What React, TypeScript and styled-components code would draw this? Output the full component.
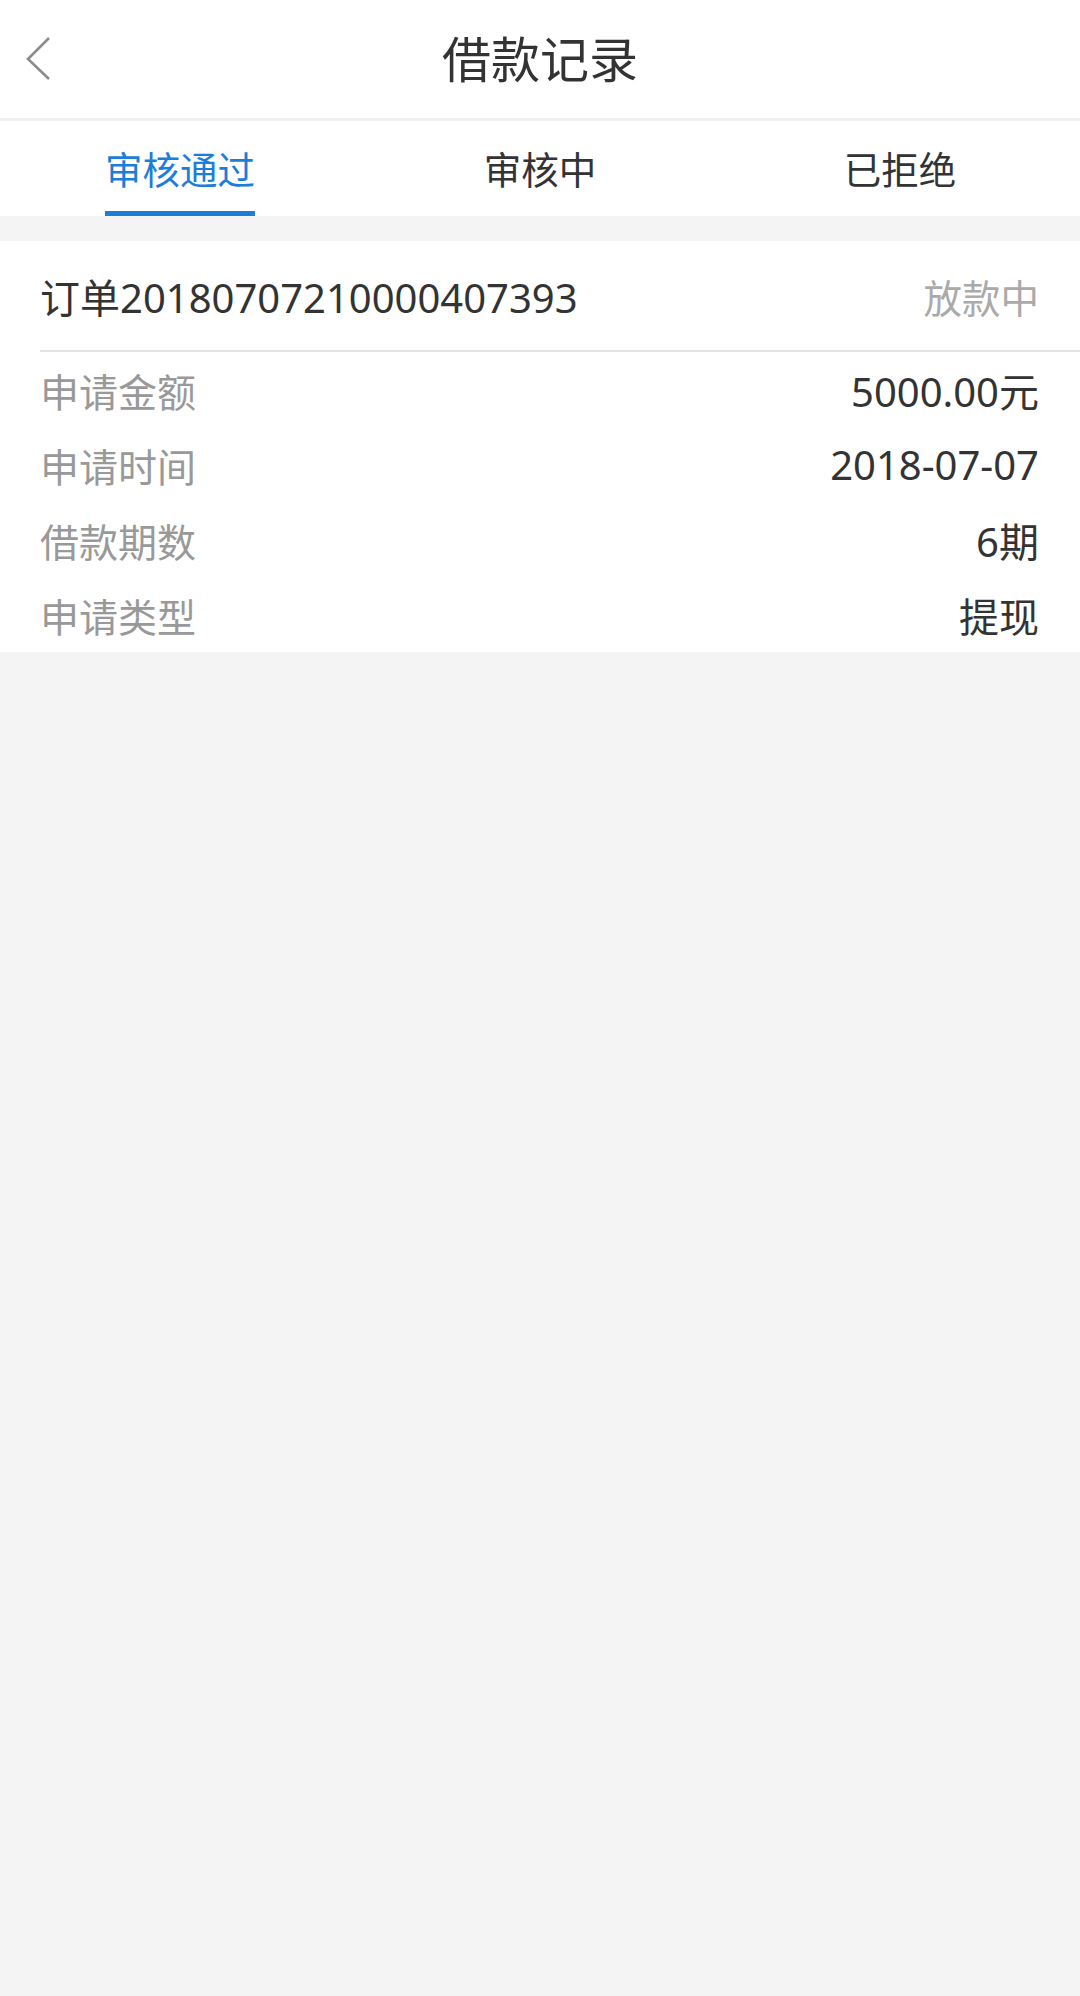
import React, { useState } from "react";
import styled, { createGlobalStyle } from "styled-components";

const GlobalStyle = createGlobalStyle`
  html, body {
    margin: 0;
    padding: 0;
    background: #f4f4f4;
  }
  body {
    font-family: "Noto Sans", "Noto Sans CJK SC", sans-serif;
    -webkit-font-smoothing: antialiased;
  }
  * {
    box-sizing: border-box;
  }
`;

const tabs = ["审核通过", "审核中", "已拒绝"];

const details = [
  { label: "申请金额", value: "5000.00元" },
  { label: "申请时间", value: "2018-07-07" },
  { label: "借款期数", value: "6期" },
  { label: "申请类型", value: "提现" },
];

const App = () => {
  const [activeTab, setActiveTab] = useState(0);

  return (
    <Page>
      <GlobalStyle />
      <NavBar>
        <BackButton aria-label="返回">
          <svg width="30" height="50" viewBox="0 0 30 50">
            <polyline
              points="24,4 3,25 24,45"
              fill="none"
              stroke="#8c8c8c"
              strokeWidth="2.6"
            />
          </svg>
        </BackButton>
        <Title>借款记录</Title>
      </NavBar>

      <TabBar>
        {tabs.map((tab, i) => (
          <Tab key={tab} onClick={() => setActiveTab(i)}>
            <TabLabel active={i === activeTab}>{tab}</TabLabel>
          </Tab>
        ))}
      </TabBar>

      <OrderCard>
        <OrderHead>
          <OrderNo>订单20180707210000407393</OrderNo>
          <OrderStatus>放款中</OrderStatus>
        </OrderHead>
        {details.map((item) => (
          <DetailRow key={item.label}>
            <DetailLabel>{item.label}</DetailLabel>
            <DetailValue>{item.value}</DetailValue>
          </DetailRow>
        ))}
      </OrderCard>
    </Page>
  );
};

const Page = styled.div`
  min-height: 1996px;
  background: #f4f4f4;
`;

const NavBar = styled.header`
  position: relative;
  height: 121px;
  background: #fff;
  border-bottom: 3px solid #efefef;
  display: flex;
  align-items: center;
  justify-content: center;
`;

const BackButton = styled.button`
  position: absolute;
  left: 25px;
  top: 34px;
  padding: 0;
  border: none;
  background: none;
  display: flex;
`;

const Title = styled.h1`
  margin: 0;
  font-size: 49px;
  font-weight: 400;
  color: #333;
  line-height: 1;
`;

const TabBar = styled.nav`
  display: grid;
  grid-template-columns: repeat(3, 1fr);
  height: 95px;
  background: #fff;
`;

const Tab = styled.div`
  display: flex;
  justify-content: center;
  cursor: pointer;
`;

const TabLabel = styled.span<{ active: boolean }>`
  display: flex;
  align-items: center;
  height: 100%;
  padding-top: 2px;
  font-size: 37.5px;
  color: ${(p) => (p.active ? "#1b7ed8" : "#333")};
  border-bottom: 5px solid ${(p) => (p.active ? "#1b7ed8" : "transparent")};
`;

const OrderCard = styled.section`
  margin-top: 25px;
  background: #fff;
  padding-left: 40px;
`;

const OrderHead = styled.div`
  display: flex;
  justify-content: space-between;
  align-items: center;
  height: 111px;
  padding-right: 41px;
  border-bottom: 2px solid #e3e3e3;
`;

const OrderNo = styled.span`
  font-size: 40px;
  color: #333;
`;

const OrderStatus = styled.span`
  font-size: 38.5px;
  color: #aaa;
`;

const DetailRow = styled.div`
  display: flex;
  justify-content: space-between;
  align-items: center;
  height: 75px;
  padding-right: 41px;
`;

const DetailLabel = styled.span`
  font-size: 39px;
  color: #999;
`;

const DetailValue = styled.span`
  font-size: 40px;
  color: #333;
`;

export default App;
